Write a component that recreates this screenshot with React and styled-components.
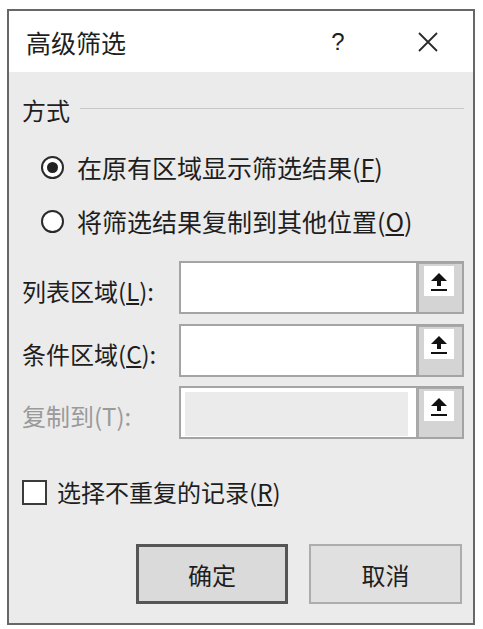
import styled, { createGlobalStyle } from 'styled-components'

const GlobalStyle = createGlobalStyle`
  html, body {
    margin: 0;
    padding: 0;
    background: #ffffff;
  }
  * {
    box-sizing: border-box;
  }
`

const Page = styled.div`
  padding: 9px 0 0 7px;
  font-family: "Noto Sans CJK SC", "Noto Sans", sans-serif;
  color: #1e1e1e;
`

const Dialog = styled.div`
  width: 468px;
  height: 616px;
  border: 2px solid #676767;
  display: flex;
  flex-direction: column;
  background: #ebebeb;
`

const TitleBar = styled.div`
  height: 61px;
  background: #ffffff;
  display: flex;
  align-items: center;
  padding: 0 20px 0 17px;
`

const Title = styled.div`
  font-size: 25px;
  line-height: 30px;
  flex: 1;
`

const Help = styled.div`
  width: 40px;
  text-align: center;
  font-size: 24px;
  line-height: 30px;
  font-family: "Liberation Sans", sans-serif;
`

const Close = styled.div`
  width: 50px;
  margin-left: 45px;
  display: flex;
  justify-content: center;
`

const Body = styled.div`
  flex: 1;
  padding: 24px 9px 0 13px;
  display: flex;
  flex-direction: column;
`

const GroupHeader = styled.div`
  display: flex;
  align-items: center;
  gap: 10px;
  height: 28px;
  font-size: 24px;
  line-height: 28px;

  &::after {
    content: '';
    flex: 1;
    height: 1px;
    margin-top: -3px;
    background: #c6c6c6;
  }
`

const RadioList = styled.div`
  display: flex;
  flex-direction: column;
  gap: 14px;
  margin: 23px 0 0 19px;
`

const OptionRow = styled.label`
  display: flex;
  align-items: center;
  gap: 13px;
  height: 40px;
  font-size: ${(p) => p.$size || 24}px;
  line-height: 30px;
  color: ${(p) => (p.$disabled ? '#9a9a9a' : '#1e1e1e')};
`

const RadioMark = styled.span`
  width: 23px;
  height: 23px;
  border-radius: 50%;
  border: 2px solid #2a2a2a;
  background: #ffffff;
  display: flex;
  align-items: center;
  justify-content: center;

  &::after {
    content: '';
    width: 11px;
    height: 11px;
    border-radius: 50%;
    background: ${(p) => (p.$checked ? '#222222' : 'transparent')};
  }
`

const Fields = styled.div`
  margin-top: 20px;
  display: flex;
  flex-direction: column;
`

const FieldRow = styled.div`
  display: flex;
  align-items: center;
  height: 53px;
  margin-top: ${(p) => p.$gap || 0}px;
`

const FieldLabel = styled.div`
  width: 157px;
  font-size: 24px;
  line-height: 30px;
  padding-top: 6px;
  color: ${(p) => (p.$disabled ? '#9a9a9a' : '#1e1e1e')};
`

const InputBox = styled.div`
  width: 285px;
  height: 53px;
  border: 2px solid #a4a4a4;
  display: flex;
  background: #ffffff;
`

const Field = styled.div`
  flex: 1;
  padding: 4px 8px 1px 4px;
  display: flex;

  &::before {
    content: '';
    flex: 1;
    background: ${(p) => (p.$disabled ? '#ebebeb' : 'transparent')};
  }
`

const Picker = styled.div`
  width: 46px;
  border-left: 3px solid #a9a9a9;
  border-top: 1px solid #a9a9a9;
  background: #d4d4d4;
  padding: 2px 0 0 5px;
`

const PickerTile = styled.div`
  width: 30px;
  height: 30px;
  background: #ffffff;
  display: flex;
`

const CheckRow = styled(OptionRow)`
  margin-top: 39px;
  height: 28px;
  gap: 10px;
`

const CheckMark = styled.span`
  width: 25px;
  height: 25px;
  border: 2px solid #3a3a3a;
  background: #ffffff;
`

const Actions = styled.div`
  display: flex;
  justify-content: flex-end;
  gap: 21px;
  margin: 38px 2px 0 0;
`

const Button = styled.div`
  width: ${(p) => (p.$primary ? 152 : 153)}px;
  height: 60px;
  display: flex;
  align-items: center;
  justify-content: center;
  font-size: 24px;
  border: ${(p) => (p.$primary ? '3px solid #555555' : '2px solid #adadad')};
  background: ${(p) => (p.$primary ? '#dadada' : '#e0e0e0')};
`

const UpArrow = () => (
  <svg width="30" height="30" viewBox="0 0 30 30">
    <polygon points="15,7 23,15 7,15" fill="#111" />
    <rect x="13" y="14" width="4" height="6" fill="#111" />
    <rect x="7" y="23" width="16" height="2" fill="#111" />
  </svg>
)

const CloseIcon = () => (
  <svg width="20" height="20" viewBox="0 0 20 20">
    <path d="M1 1 L19 19 M19 1 L1 19" stroke="#2a2a2a" strokeWidth="1.8" />
  </svg>
)

const fields = [
  { label: <>列表区域(<u>L</u>):</> },
  { label: <>条件区域(<u>C</u>):</>, gap: 10 },
  { label: <>复制到(T):</>, gap: 9, disabled: true },
]

export default function App() {
  return (
    <Page>
      <GlobalStyle />
      <Dialog>
        <TitleBar>
          <Title>高级筛选</Title>
          <Help>?</Help>
          <Close>
            <CloseIcon />
          </Close>
        </TitleBar>
        <Body>
          <GroupHeader>方式</GroupHeader>
          <RadioList>
            <OptionRow $size={25}>
              <RadioMark $checked />
              <span>在原有区域显示筛选结果(<u>F</u>)</span>
            </OptionRow>
            <OptionRow $size={25}>
              <RadioMark />
              <span>将筛选结果复制到其他位置(<u>O</u>)</span>
            </OptionRow>
          </RadioList>
          <Fields>
            {fields.map((f, i) => (
              <FieldRow key={i} $gap={f.gap}>
                <FieldLabel $disabled={f.disabled}>{f.label}</FieldLabel>
                <InputBox>
                  <Field $disabled={f.disabled} />
                  <Picker>
                    <PickerTile>
                      <UpArrow />
                    </PickerTile>
                  </Picker>
                </InputBox>
              </FieldRow>
            ))}
          </Fields>
          <CheckRow>
            <CheckMark />
            <span>选择不重复的记录(<u>R</u>)</span>
          </CheckRow>
          <Actions>
            <Button $primary>确定</Button>
            <Button>取消</Button>
          </Actions>
        </Body>
      </Dialog>
    </Page>
  )
}
